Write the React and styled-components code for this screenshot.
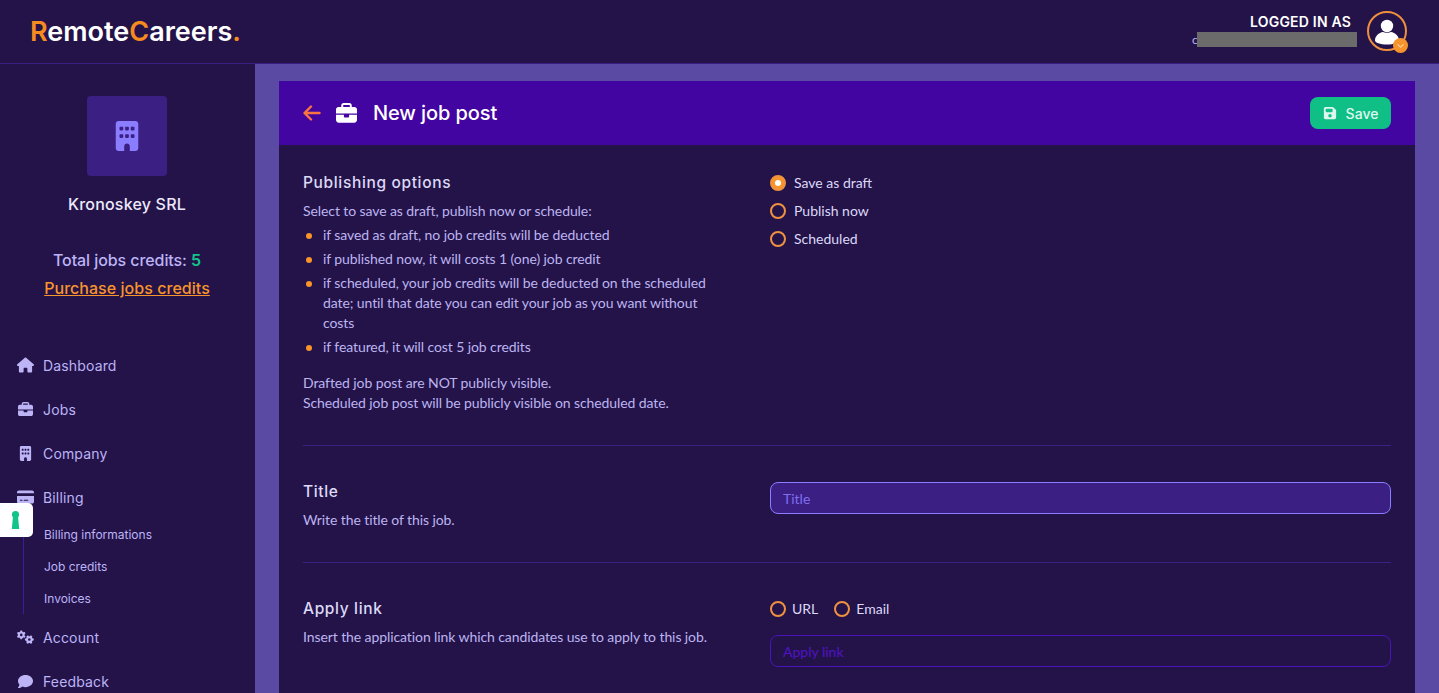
import React from "react";
import styled, { createGlobalStyle } from "styled-components";
import { FaHouse, FaBriefcase, FaBuilding, FaCreditCard, FaGears, FaComment, FaFloppyDisk, FaChevronDown } from "react-icons/fa6";

const Global = createGlobalStyle`
  html, body { margin: 0; padding: 0; height: 100%; overflow: hidden; background: #231349; }
  * { box-sizing: border-box; }
  body { font-family: "Lato", "Liberation Sans", sans-serif; color: #bdb4f0; }
`;

const heading = `"Inter", "Liberation Sans", sans-serif`;

const Page = styled.div`
  height: 693px;
  display: flex;
  flex-direction: column;
  overflow: hidden;
`;
const TopBar = styled.header`
  flex: 0 0 64px;
  display: flex;
  align-items: center;
  justify-content: space-between;
  padding: 0 32px 1px 30px;
  background: #231349;
  border-bottom: 1px solid #3b1f83;
`;
const Logo = styled.div`
  font-family: ${heading};
  font-weight: 600;
  font-size: 27px;
  color: #fff;
  line-height: 1;
  span { color: #f58a1f; }
`;
const UserBox = styled.div`
  display: flex;
  align-items: center;
  gap: 10px;
`;
const UserText = styled.div`
  display: flex;
  flex-direction: column;
  align-items: flex-end;
  margin-top: -2px;
`;
const LoggedAs = styled.div`
  font-family: ${heading};
  font-weight: 600;
  font-size: 14px;
  line-height: 18px;
  letter-spacing: 0.2px;
  color: #fff;
  margin-right: 6px;
`;
const Email = styled.div`
  position: relative;
  width: 165px;
  height: 15px;
  font-size: 12px;
  line-height: 15px;
  color: #bdb4f0;
  margin-top: 1px;
  &::after {
    content: "";
    position: absolute;
    left: 5px;
    top: 0;
    width: 160px;
    height: 15px;
    background: #6b6b6b;
  }
`;
const Avatar = styled.div`
  position: relative;
  width: 40px;
  height: 40px;
  border-radius: 50%;
  border: 2px solid #ee8f3e;
  display: flex;
  flex-direction: column;
  align-items: center;
  svg.user { display: block; }
`;
const AvatarBadge = styled.div`
  position: absolute;
  right: -3px;
  bottom: -4px;
  width: 15px;
  height: 15px;
  border-radius: 50%;
  background: #f7942c;
  color: #fde3c4;
  display: flex;
  align-items: center;
  justify-content: center;
`;
const Body = styled.div`
  flex: 1;
  display: flex;
  min-height: 0;
`;
const Sidebar = styled.aside`
  flex: 0 0 255px;
  background: #231349;
  position: relative;
  display: flex;
  flex-direction: column;
  align-items: center;
  padding: 32px 1px 0 0;
  overflow: hidden;
  > * { flex-shrink: 0; }
`;
const CompanyLogo = styled.div`
  width: 80px;
  height: 80px;
  border-radius: 4px;
  background: #3b1f83;
  color: #8b7dff;
  display: flex;
  align-items: center;
  justify-content: center;
`;
const CompanyName = styled.div`
  margin-top: 18px;
  font-family: ${heading};
  font-weight: 500;
  font-size: 16px;
  line-height: 20px;
  letter-spacing: 0.2px;
  color: #ece9fc;
`;
const Credits = styled.div`
  margin-top: 36px;
  font-family: ${heading};
  font-weight: 500;
  font-size: 16px;
  line-height: 20px;
  letter-spacing: -0.08px;
  color: #bdb4f6;
  b { color: #12c48b; font-weight: 600; }
`;
const Purchase = styled.a`
  margin-top: 8px;
  font-family: ${heading};
  font-weight: 500;
  font-size: 16px;
  line-height: 20px;
  letter-spacing: 0.04px;
  color: #f7942c;
  text-decoration: underline;
`;
const Nav = styled.nav`
  align-self: stretch;
  margin-top: 45px;
  padding-left: 17px;
  display: flex;
  flex-direction: column;
  > * { flex-shrink: 0; }
`;
const NavItem = styled.div`
  height: 44px;
  display: flex;
  align-items: center;
  gap: 9px;
  font-family: ${heading};
  font-weight: 400;
  font-size: 14px;
  letter-spacing: 0.15px;
  color: #bdb4f6;
  svg { flex: 0 0 17px; }
`;
const SubNav = styled.div`
  margin-left: 6px;
  margin-top: -1px;
  margin-bottom: 1px;
  padding-left: 20px;
  border-left: 1px solid #3f1a99;
  display: flex;
  flex-direction: column;
`;
const SubItem = styled.div`
  height: 32px;
  display: flex;
  align-items: center;
  font-family: ${heading};
  font-size: 12px;
  color: #bdb4f6;
`;
const KeyBadge = styled.div`
  position: absolute;
  left: 0;
  top: 439px;
  width: 33px;
  height: 34px;
  background: #fff;
  border-radius: 0 5px 5px 0;
  display: flex;
  align-items: center;
  justify-content: center;
  padding-right: 2px;
`;
const Main = styled.main`
  flex: 1;
  min-width: 0;
  background: #5a4aa3;
  padding: 17px 24px 0;
  overflow: hidden;
`;
const Card = styled.section`
  background: #231349;
  min-height: 100%;
`;
const CardHeader = styled.div`
  height: 64px;
  background: #4305a1;
  padding: 0 24px;
  display: flex;
  align-items: center;
`;
const Back = styled.svg`
  width: 18px;
  height: 16px;
  margin-right: 15px;
`;
const CardTitle = styled.h1`
  margin: 0 0 0 16px;
  font-family: ${heading};
  font-weight: 500;
  font-size: 20px;
  letter-spacing: -0.1px;
  color: #fff;
  flex: 1;
`;
const SaveButton = styled.button`
  width: 81px;
  height: 32px;
  border: 0;
  border-radius: 8px;
  background: #0fbf86;
  color: #dff8ee;
  font-family: ${heading};
  font-weight: 500;
  font-size: 14px;
  display: flex;
  align-items: center;
  justify-content: center;
  gap: 9px;
`;
const Content = styled.div`
  padding: 0 24px;
`;
const Section = styled.div`
  display: grid;
  grid-template-columns: 467px 1fr;
  padding-top: ${p => p.$top}px;
  height: ${p => p.$height}px;
  border-bottom: ${p => (p.$line ? "1px solid #3b1f83" : "0")};
`;
const SectionTitle = styled.h2`
  margin: 0 0 7px;
  font-family: ${heading};
  font-weight: 500;
  font-size: 15.5px;
  line-height: 22px;
  letter-spacing: 0.65px;
  color: #ddd9f7;
`;
const Para = styled.p`
  margin: ${p => p.$mt || 0}px 0 0;
  font-size: 14px;
  line-height: 20px;
  letter-spacing: -0.09px;
  color: #bdb4f0;
  width: 410px;
`;
const List = styled.ul`
  margin: 4px 0 0;
  padding: 0;
  list-style: none;
  width: 404px;
`;
const ListItem = styled.li`
  position: relative;
  padding-left: 20px;
  margin-bottom: 4px;
  font-size: 14px;
  line-height: 20px;
  letter-spacing: -0.09px;
  color: #bdb4f0;
  &::before {
    content: "";
    position: absolute;
    left: 3px;
    top: 8px;
    width: 6px;
    height: 6px;
    border-radius: 50%;
    background: #f7942c;
  }
`;
const RadioStack = styled.div`
  display: flex;
  flex-direction: column;
  gap: 8px;
  padding-top: 1px;
`;
const RadioRow = styled.div`
  display: flex;
  gap: 16px;
  padding-top: 1px;
`;
const RadioLabel = styled.label`
  display: flex;
  align-items: center;
  gap: ${p => p.$gap || 8}px;
  font-size: 14px;
  line-height: 20px;
  color: #dcd8f8;
`;
const RadioDot = styled.span`
  width: 16px;
  height: 16px;
  border-radius: 50%;
  border: 2px solid #ee9140;
  background: ${p => (p.$on ? "#f7942c" : "transparent")};
  display: flex;
  align-items: center;
  justify-content: center;
  &::after {
    content: "";
    display: ${p => (p.$on ? "block" : "none")};
    width: 6px;
    height: 6px;
    border-radius: 50%;
    background: #fff;
  }
`;
const InputWrap = styled.div`
  margin-top: ${p => p.$mt}px;
`;
const Input = styled.input`
  display: block;
  width: 100%;
  height: 32px;
  padding: 0 12px;
  border-radius: 8px;
  border: 1px solid ${p => (p.$active ? "#8b7dff" : "#4a14b8")};
  background: ${p => (p.$active ? "#3b1f83" : "transparent")};
  font-family: "Lato", sans-serif;
  font-size: 14px;
  outline: none;
  &::placeholder {
    color: ${p => (p.$active ? "#7f6ef0" : "#5212c8")};
    opacity: 1;
  }
`;
const Keyhole = () => (
  <svg width="9" height="18" viewBox="0 0 9 18">
    <circle cx="4.5" cy="3.6" r="3.6" fill="#12c48b" />
    <path d="M2 5h5l1.2 13H.8z" fill="#12c48b" />
  </svg>
);

export default function App() {
  return (
    <Page>
      <Global />
      <TopBar>
        <Logo><span>R</span>emote<span>C</span>areers<span>.</span></Logo>
        <UserBox>
          <UserText>
            <LoggedAs>LOGGED IN AS</LoggedAs>
            <Email>c</Email>
          </UserText>
          <Avatar>
            <svg className="user" width="36" height="36" viewBox="0 0 36 36">
              <circle cx="18" cy="13" r="6.200" fill="#fff" />
              <path d="M6 27.500c0-4.500 4-8 8-8.500 2 1 6 1 8 0 4 .5 8 4 8 8.500 0 2-5 4-12 4s-12-2-12-4z" fill="#fff" />
            </svg>
            <AvatarBadge><FaChevronDown size={7} /></AvatarBadge>
          </Avatar>
        </UserBox>
      </TopBar>
      <Body>
        <Sidebar>
          <CompanyLogo><FaBuilding size={30} /></CompanyLogo>
          <CompanyName>Kronoskey SRL</CompanyName>
          <Credits>Total jobs credits: <b>5</b></Credits>
          <Purchase>Purchase jobs credits</Purchase>
          <Nav>
            <NavItem><FaHouse size={16} />Dashboard</NavItem>
            <NavItem><FaBriefcase size={15} />Jobs</NavItem>
            <NavItem><FaBuilding size={15} />Company</NavItem>
            <NavItem><FaCreditCard size={16} />Billing</NavItem>
            <SubNav>
              <SubItem>Billing informations</SubItem>
              <SubItem>Job credits</SubItem>
              <SubItem>Invoices</SubItem>
            </SubNav>
            <NavItem><FaGears size={18} />Account</NavItem>
            <NavItem><FaComment size={15} />Feedback</NavItem>
          </Nav>
          <KeyBadge><Keyhole /></KeyBadge>
        </Sidebar>
        <Main>
          <Card>
            <CardHeader>
              <Back viewBox="0 0 18 16" fill="none" stroke="#f9743f" strokeWidth="2.4" strokeLinecap="round" strokeLinejoin="round">
                <path d="M8 1.500 1.500 8 8 14.500M2 8h14.500" />
              </Back>
              <FaBriefcase size={21} color="#fff" />
              <CardTitle>New job post</CardTitle>
              <SaveButton><FaFloppyDisk size={14} />Save</SaveButton>
            </CardHeader>
            <Content>
              <Section $top={27} $height={301} $line>
                <div>
                  <SectionTitle>Publishing options</SectionTitle>
                  <Para>Select to save as draft, publish now or schedule:</Para>
                  <List>
                    <ListItem>if saved as draft, no job credits will be deducted</ListItem>
                    <ListItem>if published now, it will costs 1 (one) job credit</ListItem>
                    <ListItem>if scheduled, your job credits will be deducted on the scheduled date; until that date you can edit your job as you want without costs</ListItem>
                    <ListItem>if featured, it will cost 5 job credits</ListItem>
                  </List>
                  <Para $mt={16}>Drafted job post are NOT publicly visible.<br />Scheduled job post will be publicly visible on scheduled date.</Para>
                </div>
                <RadioStack>
                  <RadioLabel><RadioDot $on />Save as draft</RadioLabel>
                  <RadioLabel><RadioDot />Publish now</RadioLabel>
                  <RadioLabel><RadioDot />Scheduled</RadioLabel>
                </RadioStack>
              </Section>
              <Section $top={35} $height={117} $line>
                <div>
                  <SectionTitle>Title</SectionTitle>
                  <Para>Write the title of this job.</Para>
                </div>
                <InputWrap $mt={1}>
                  <Input $active placeholder="Title" readOnly />
                </InputWrap>
              </Section>
              <Section $top={35} $height={140}>
                <div>
                  <SectionTitle>Apply link</SectionTitle>
                  <Para>Insert the application link which candidates use to apply to this job.</Para>
                </div>
                <div>
                  <RadioRow>
                    <RadioLabel $gap={6}><RadioDot />URL</RadioLabel>
                    <RadioLabel $gap={6}><RadioDot />Email</RadioLabel>
                  </RadioRow>
                  <InputWrap $mt={16}><Input placeholder="Apply link" readOnly /></InputWrap>
                </div>
              </Section>
            </Content>
          </Card>
        </Main>
      </Body>
    </Page>
  );
}
